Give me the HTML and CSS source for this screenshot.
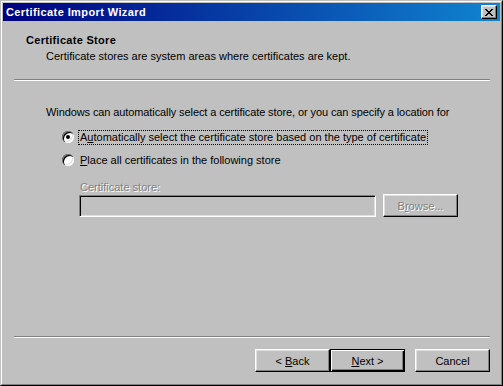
FILE: index.html
```html
<!DOCTYPE html>
<html lang="en">
<head>
  <meta charset="UTF-8" />
  <title>Certificate Import Wizard</title>
  <link rel="stylesheet" href="styles.css">
</head>
<body>
  <div class="window">
    <div class="frame">
      <div class="titlebar">
        <span class="title">Certificate Import Wizard</span>
        <button class="close-btn" aria-label="Close">
          <svg width="8" height="7" viewBox="0 0 8 7">
            <path d="M0 0h2v1h-2zM6 0h2v1h-2zM1 1h2v1h-2zM5 1h2v1h-2zM2 2h4v1h-4zM3 3h2v1h-2zM2 4h4v1h-4zM1 5h2v1h-2zM5 5h2v1h-2zM0 6h2v1h-2zM6 6h2v1h-2z" fill="#000"/>
          </svg>
        </button>
      </div>

      <div class="header">
        <div class="header-title">Certificate Store</div>
        <div class="header-sub">Certificate stores are system areas where certificates are kept.</div>
      </div>
      <div class="sep"></div>

      <div class="content">
        <div class="intro">Windows can automatically select a certificate store, or you can specify a location for</div>

        <div class="option">
          <span class="radio checked"></span>
          <span class="label focused">A<u>u</u>tomatically select the certificate store based on the type of certificate</span>
        </div>
        <div class="option second">
          <span class="radio"></span>
          <span class="label"><u>P</u>lace all certificates in the following store</span>
        </div>

        <div class="store">
          <div class="disabled-text">Certificate store:</div>
          <div class="store-row">
            <div class="field"></div>
            <button class="btn disabled"><span class="disabled-text">B<u>r</u>owse...</span></button>
          </div>
        </div>
      </div>

      <div class="sep"></div>
      <div class="footer">
        <button class="btn">&lt; <u>B</u>ack</button>
        <button class="btn default"><u>N</u>ext &gt;</button>
        <button class="btn cancel">Cancel</button>
      </div>
    </div>
  </div>
</body>
</html>
```

FILE: styles.css
```css
body {
  margin: 0;
  background-color: #c0c0c0;
  font-family: "Liberation Sans", Arial, sans-serif;
  font-size: 11px;
  line-height: 13px;
  color: #000;
}
.window {
  width: 503px;
  height: 386px;
  box-sizing: border-box;
  border: 1px solid;
  border-color: #c0c0c0 #000 #000 #c0c0c0;
}
.frame {
  height: 100%;
  box-sizing: border-box;
  border: 1px solid;
  border-color: #fff #808080 #808080 #fff;
  padding: 1px;
  display: flex;
  flex-direction: column;
}
.titlebar {
  height: 18px;
  flex: none;
  display: flex;
  align-items: center;
  justify-content: space-between;
  padding: 0 3px 0 3px;
  background: linear-gradient(to right, #000080, #1084d0);
}
.title {
  color: #fff;
  font-weight: bold;
  letter-spacing: 0.4px;
}
.close-btn {
  width: 16px;
  height: 14px;
  padding: 0;
  box-sizing: border-box;
  display: flex;
  align-items: center;
  justify-content: center;
  background-color: #c0c0c0;
  border: 1px solid;
  border-color: #fff #000 #000 #fff;
  box-shadow: inset -1px -1px #808080, inset 1px 1px #dfdfdf;
}
.header {
  height: 58px;
  flex: none;
  box-sizing: border-box;
  padding: 13px 0 0 23px;
}
.header-title {
  font-weight: bold;
  letter-spacing: 0.3px;
}
.header-sub {
  margin-top: 3px;
  padding-left: 20px;
}
.sep {
  flex: none;
  height: 0;
  margin: 0 10px 0 11px;
  border-top: 1px solid #808080;
  border-bottom: 1px solid #fff;
}
.content {
  flex: 1;
  padding: 25px 0 0 43px;
}
.intro {
  letter-spacing: -0.1px;
}
.option {
  display: flex;
  align-items: center;
  margin-top: 11px;
  padding-left: 16px;
  height: 14px;
}
.option.second {
  margin-top: 9px;
}
.radio {
  position: relative;
  width: 12px;
  height: 12px;
  margin-right: 4px;
  border-radius: 50%;
  background-color: #fff;
  box-shadow: inset 1px 1px 0 #808080, inset 2px 2px 0 #000, inset -1px -1px 0 #fff, inset -2px -2px 0 #dfdfdf;
}
.radio.checked::after {
  content: "";
  position: absolute;
  left: 4px;
  top: 4px;
  width: 4px;
  height: 4px;
  border-radius: 50%;
  background-color: #000;
}
.label {
  padding: 0 1px;
  border: 1px dotted transparent;
}
.label.focused {
  border-color: #000;
}
.store {
  margin-top: 14px;
  padding-left: 34px;
}
.disabled-text {
  color: #808080;
  text-shadow: 1px 1px 0 #fff;
}
.store-row {
  display: flex;
  align-items: flex-start;
  gap: 7px;
  margin-top: 0;
  margin-left: -1px;
}
.field {
  width: 297px;
  height: 22px;
  box-sizing: border-box;
  margin-top: 1px;
  border: 1px solid;
  border-color: #808080 #fff #fff #808080;
  box-shadow: inset 1px 1px #000, inset -1px -1px #dfdfdf;
  background-color: #c0c0c0;
}
.btn {
  width: 75px;
  height: 23px;
  padding: 0;
  box-sizing: border-box;
  font-family: inherit;
  font-size: 11px;
  color: #000;
  background-color: #c0c0c0;
  border: 1px solid;
  border-color: #fff #000 #000 #fff;
  box-shadow: inset -1px -1px #808080, inset 1px 1px #dfdfdf;
}
.btn.default {
  border-color: #000;
  box-shadow: inset 1px 1px #fff, inset -1px -1px #000, inset -2px -2px #808080;
}
.footer {
  flex: none;
  height: 45px;
  box-sizing: border-box;
  display: flex;
  justify-content: flex-end;
  padding: 11px 10px 0 0;
}
.cancel {
  margin-left: 10px;
}
```
